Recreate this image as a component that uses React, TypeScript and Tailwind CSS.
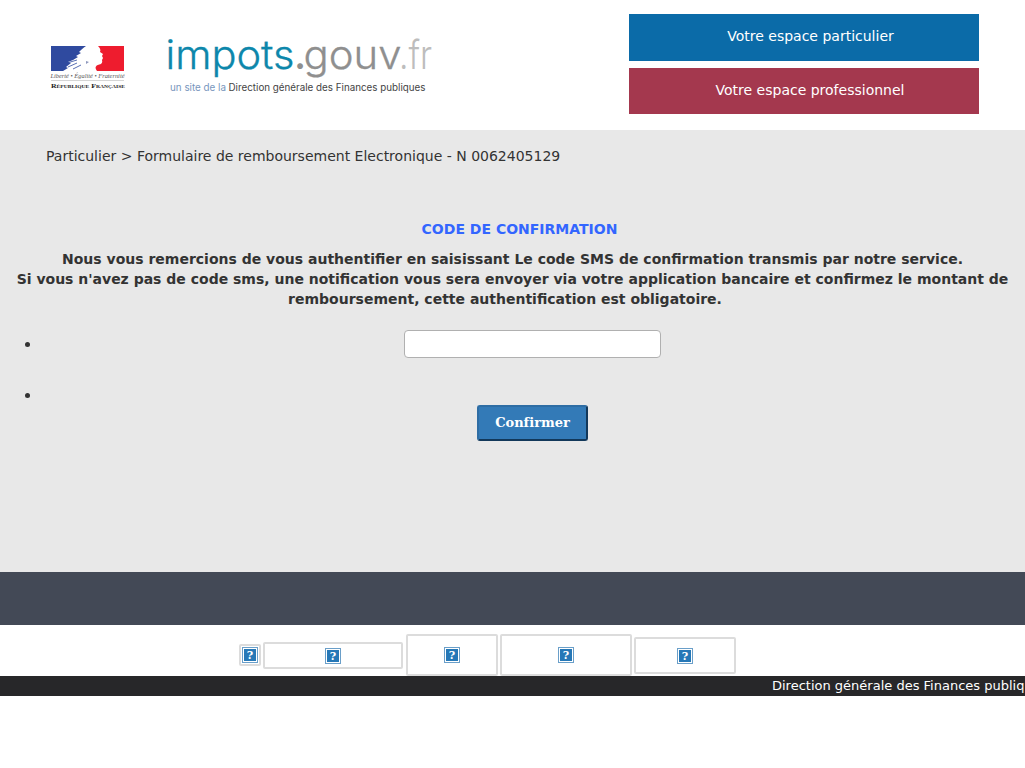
import React from "react";

function RepublicLogo() {
  return (
    <svg className="block h-[50px] w-[80px] overflow-visible" viewBox="0 0 80 50" aria-hidden="true">
      <rect x="3" y="3" width="73" height="25" fill="#fff" />
      <path d="M3 3H38C35 5 33 7 31 9L33 10L28 13L30 14L25 17L20 19L23 20L18 24L20 25L15 28H3Z" fill="#2f4a9f" />
      <path d="M50 3H76V28H49C46 24 48 22 53 21C55 19 54 18 54 17L55 15L54 13L55 11L52 9C53 7 52 5 50 3Z" fill="#ee1c2e" />
      <path d="M19 20L29 17M20 24L29 20M25 26L33 22" stroke="#2f4a9f" strokeWidth="0.8" fill="none" />
      <path d="M38 18L41 19L38 21Z" fill="#8d97bd" />
      <text x="2.5" y="35" textLength="74" lengthAdjust="spacingAndGlyphs" fill="#555" fontFamily="Liberation Serif, serif" fontStyle="italic" fontSize="6.2">Liberté • Égalité • Fraternité</text>
      <path d="M3 37.5H76" stroke="#aaa" strokeWidth="0.5" />
      <text x="3" y="45" textLength="74" lengthAdjust="spacingAndGlyphs" fill="#222" fontFamily="Liberation Serif, serif" fontWeight="bold" fontSize="7" style={{ fontVariant: "small-caps" }}>République Française</text>
    </svg>
  );
}

function SiteLogo() {
  return (
    <svg className="block h-[70px] w-[270px] overflow-visible" viewBox="0 0 270 70" fontFamily="Inter, sans-serif">
      <g fontSize="40" fontWeight="300">
        <text x="-2.5" y="39" textLength="129" lengthAdjust="spacingAndGlyphs" fill="#0d87ab" stroke="#0d87ab" strokeWidth="0.3">impots</text>
        <text x="126" y="39" fill="#8f8f8f" fontWeight="500">.</text>
        <text x="135.5" y="39" textLength="98" lengthAdjust="spacingAndGlyphs" fill="#8f8f8f" stroke="#8f8f8f" strokeWidth="0.3">gouv</text>
        <text x="231" y="39" textLength="33" lengthAdjust="spacingAndGlyphs" fill="#bdbdbd">.fr</text>
      </g>
      <g fontSize="9.7">
        <text x="2" y="61" textLength="56" lengthAdjust="spacingAndGlyphs" fill="#7896bd">un site de la</text>
        <text x="60.5" y="61" textLength="197" lengthAdjust="spacingAndGlyphs" fill="#444">Direction générale des Finances publiques</text>
      </g>
    </svg>
  );
}

function MissingPicture({ className }: { className: string }) {
  return (
    <span className={`flex shrink-0 items-center justify-center rounded-[2px] border-2 border-[#dcdcdc] ${className}`}>
      <svg className="block size-4 overflow-visible" viewBox="0 0 16 16">
        <rect x="0.5" y="0.5" width="15" height="15" fill="#fff" stroke="#6a9fc9" />
        <rect x="2" y="2" width="12" height="12" fill="#2678b7" />
        <text x="8" y="12" textAnchor="middle" fill="#fff" fontFamily="DejaVu Serif, serif" fontWeight="bold" fontSize="11">?</text>
      </svg>
    </span>
  );
}

export default function App() {
  return (
    <div className="min-h-[768px] w-full overflow-hidden bg-white font-['DejaVu_Sans',sans-serif] text-[14px] leading-5 text-[#333]">
      <header className="flex h-[130px] items-start">
        <div className="ml-12 mt-[43px]">
          <RepublicLogo />
        </div>
        <div className="ml-10 mt-[30px]">
          <SiteLogo />
        </div>
        <div className="ml-auto mr-[46px] mt-[14px] flex w-[350px] flex-col gap-[7px] text-center text-white">
          <div className="h-[47px] bg-[#0b6ba8] pl-[13px] pt-3">Votre espace particulier</div>
          <div className="h-[46px] bg-[#a4384e] pl-3 pt-3">Votre espace professionnel</div>
        </div>
      </header>

      <main className="h-[442px] bg-[#e8e8e8] pt-4">
        <p className="pl-[46px]">Particulier &gt; Formulaire de remboursement Electronique - N 0062405129</p>
        <h1 className="mt-[53px] pl-[14px] text-center font-bold text-[#3366ff]">CODE DE CONFIRMATION</h1>
        <p className="mt-[10px] text-center font-bold">
          Nous vous remercions de vous authentifier en saisissant Le code SMS de confirmation transmis par notre service.
          <br />
          <span className="whitespace-nowrap">Si vous n'avez pas de code sms, une notification vous sera envoyer via votre application bancaire et confirmez le montant de</span>
          <br />
          <span className="mr-[15px]">remboursement, cette authentification est obligatoire.</span>
        </p>
        <ul className="mt-[21px]">
          <li className="flex h-[28px] items-center">
            <span className="ml-[24.5px] size-[5px] rounded-full bg-[#333]" />
            <span className="ml-[374.5px] h-[28px] w-[257px] rounded-[4px] border border-[#b0b0b0] bg-white" />
          </li>
          <li className="mt-[35px]">
            <span className="ml-[24.5px] block size-[5px] rounded-full bg-[#333]" />
            <span className="ml-[477px] mt-[7px] flex h-[36px] w-[111px] items-center justify-center rounded-[3px] border-2 border-b-[#12385a] border-l-[#2e6da4] border-r-[#12385a] border-t-[#2e6da4] bg-[#337ab7] font-['DejaVu_Serif',serif] text-[13px] font-bold text-white [font-variant-ligatures:none]">
              Confirmer
            </span>
          </li>
        </ul>
      </main>

      <div className="h-[53px] bg-[#434956]" />
      <div className="flex h-[51px] items-start pl-[239px]">
        <MissingPicture className="mt-[19px] h-[22px] w-[22px]" />
        <MissingPicture className="ml-[2px] mt-[17px] h-[27px] w-[140px]" />
        <MissingPicture className="ml-[3px] mt-[9px] h-[42px] w-[92px]" />
        <MissingPicture className="ml-[2px] mt-[9px] h-[42px] w-[132px]" />
        <MissingPicture className="ml-[2px] mt-[12px] h-[37px] w-[102px]" />
      </div>
      <footer className="h-5 overflow-hidden whitespace-nowrap bg-[#272729] pl-[772px] text-[13px] text-white">
        Direction générale des Finances publiq
      </footer>
    </div>
  );
}
